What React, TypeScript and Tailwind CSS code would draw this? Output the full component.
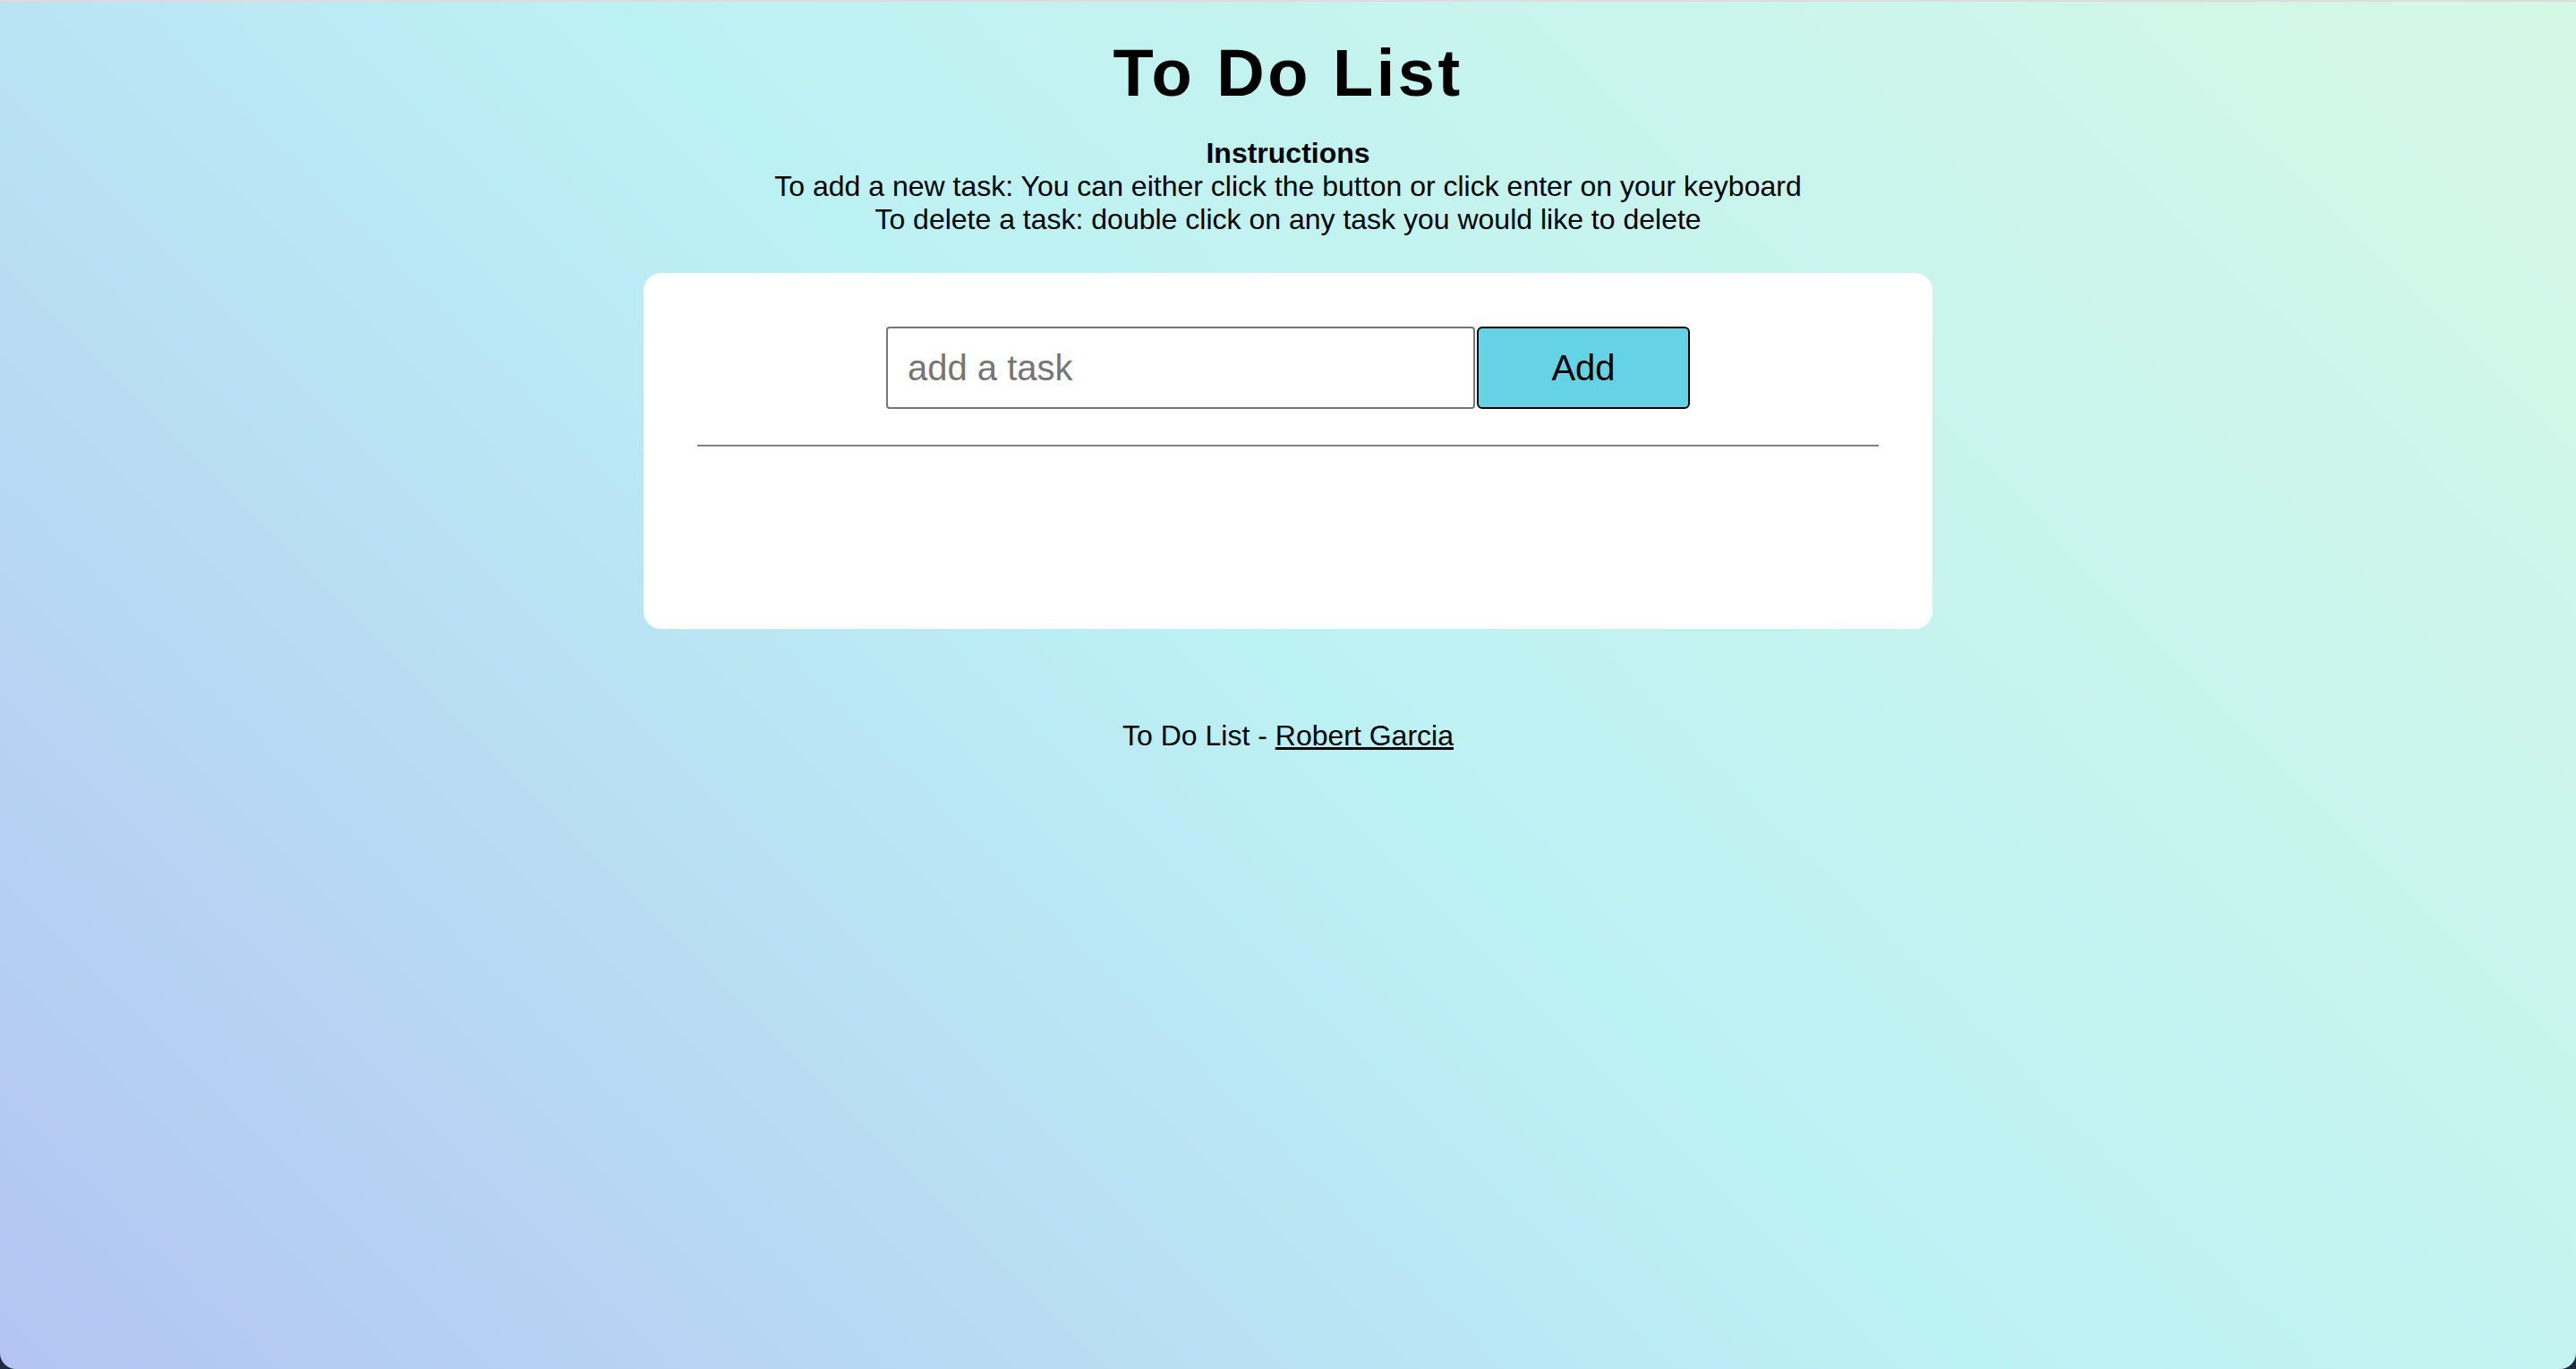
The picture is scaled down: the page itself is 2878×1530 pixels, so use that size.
import React from "react";

export default function App() {
  return (
    <div className="w-[2878px] h-[1530px] bg-[#1f2a42] overflow-hidden" style={{ fontFamily: '"Liberation Sans", Arial, Helvetica, sans-serif' }}>
      <div className="w-full h-full rounded-b-[18px] border-t-2 border-[#dcdcdc] bg-[linear-gradient(45deg,#b3c4f2_0%,#bcf1f4_50%,#d5f8e5_100%)] flex flex-col items-center text-black">
        <h1 className="mt-[43px] text-[74px] leading-none font-bold tracking-[3.5px]">To Do List</h1>
        <div className="mt-[34px] text-[32px] leading-[37px] text-center">
          <div className="font-bold">Instructions</div>
          <div>To add a new task: You can either click the button or click enter on your keyboard</div>
          <div>To delete a task: double click on any task you would like to delete</div>
        </div>
        <div className="mt-[41px] w-[1440px] h-[398px] bg-white rounded-[20px] px-[60px] pt-[60px] flex flex-col">
          <div className="flex justify-center items-stretch gap-[2px]">
            <input
              type="text"
              placeholder="add a task"
              className="w-[658px] h-[92px] border-2 border-[#767676] rounded-[4px] pl-[22px] text-[40px] placeholder:text-[#757575] outline-none bg-white"
            />
            <button className="w-[238px] h-[92px] bg-[#66d2e6] border-2 border-black rounded-[6px] text-[40px] text-black">
              Add
            </button>
          </div>
          <div className="mt-[40px] h-[2px] bg-[#808080] w-full"></div>
        </div>
        <div className="mt-[101px] text-[32px] leading-[37px]">
          To Do List - <a href="#" className="underline text-black">Robert Garcia</a>
        </div>
      </div>
    </div>
  );
}
